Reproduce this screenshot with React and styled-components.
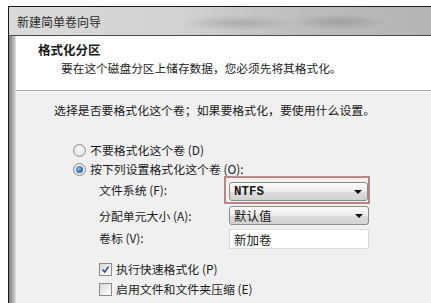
import React from 'react';
import styled, {createGlobalStyle, css} from 'styled-components';

const GlobalStyle = createGlobalStyle`
  html, body {
    margin: 0;
    padding: 0;
    background: #fff;
  }
  body {
    font-family: "Noto Sans CJK SC", "Liberation Sans", sans-serif;
    color: #1b1b1b;
    overflow: hidden;
  }
`;

const Window = styled.div`
  margin: 6px 0 0 8px;
  height: 297px;
  border-top: 1px solid #1a1a1a;
  border-left: 1px solid #1a1a1a;
  display: flex;
  flex-direction: column;
`;

const TitleBar = styled.div`
  height: 28px;
  display: flex;
  align-items: center;
  padding-left: 8px;
  font-size: 12px;
  color: #2a2a2a;
  background:
    radial-gradient(ellipse 60px 8px at 230px 16px, rgba(120,120,120,0.35), transparent),
    radial-gradient(ellipse 50px 8px at 330px 15px, rgba(110,110,110,0.35), transparent),
    linear-gradient(to right, #dadada 0%, #d2d2d2 40%, #bdbdbd 70%, #b4b4b4 100%);
  border-bottom: 1px solid #4a4a4a;
`;

const Frame = styled.div`
  flex: 1;
  display: flex;
`;

const LeftEdge = styled.div`
  width: 7px;
  background: linear-gradient(to right, #7c7c7c 0%, #9c9c9c 35%, #bcbcbc 70%, #e2e2e2 100%);
`;

const Content = styled.div`
  flex: 1;
  display: flex;
  flex-direction: column;
`;

const Header = styled.div`
  height: 55px;
  background: #fff;
  padding: 6px 0 0 22px;
  box-sizing: border-box;
  border-bottom: 1px solid #a8a8a8;
`;

const HeaderTitle = styled.div`
  font-size: 12.5px;
  font-weight: bold;
  line-height: 16px;
`;

const HeaderSub = styled.div`
  font-size: 11.7px;
  line-height: 16px;
  margin: 2px 0 0 23px;
`;

const Body = styled.div`
  flex: 1;
  background: #f0f0f0;
  border-top: 1px solid #fafafa;
  padding: 10px 0 0 38px;
  font-size: 11.9px;
`;

const Instruction = styled.div`
  line-height: 16px;
`;

const Options = styled.div`
  margin: 24px 0 0 19px;
  display: flex;
  flex-direction: column;
  gap: 3px;
`;

const Choice = styled.div`
  display: flex;
  align-items: center;
  gap: 4px;
  height: 16px;
  line-height: 16px;
`;

const Radio = styled.span`
  width: 11px;
  height: 11px;
  border-radius: 50%;
  border: 1px solid #8c8c8c;
  background: radial-gradient(circle at 50% 40%, #fafafa 0%, #dadada 100%);
  position: relative;
  ${p => p.$checked && css`
    &::after {
      content: "";
      position: absolute;
      left: 2px;
      top: 2px;
      width: 7px;
      height: 7px;
      border-radius: 50%;
      background: radial-gradient(circle at 40% 40%, #8ec0ef 0%, #2f6fb8 60%, #1d4a86 100%);
    }
  `}
`;

const Form = styled.div`
  margin: -4px 0 0 26px;
  display: grid;
  grid-template-columns: 125px 150px;
  row-gap: 2px;
  align-items: center;
`;

const Label = styled.div`
  line-height: 16px;
`;

const Highlight = styled.div`
  border: 2px solid #b98686;
  background: #f6f0f0;
  padding: 4px 3px 1px 3px;
  width: 146px;
  box-sizing: border-box;
`;

const Combo = styled.div`
  height: 19px;
  box-sizing: border-box;
  border: 1px solid #8a8a8a;
  border-radius: 3px;
  background: linear-gradient(to bottom, #fbfbfb 0%, #ececec 50%, #dcdcdc 51%, #d2d2d2 100%);
  display: flex;
  align-items: center;
  justify-content: space-between;
  padding: 0 4px 0 4px;
  width: ${p => p.$width || 139}px;
  margin-left: ${p => p.$offset || 0}px;
  font-family: ${p => p.$mono ? '"Liberation Mono", monospace' : 'inherit'};
  font-size: 12.5px;
  font-weight: ${p => p.$mono ? 'bold' : 'normal'};
  color: #1a1a1a;
`;

const Arrow = styled.span`
  width: 0;
  height: 0;
  border-left: 4px solid transparent;
  border-right: 4px solid transparent;
  border-top: 4px solid #111;
  margin-right: 1px;
`;

const TextBox = styled.div`
  height: 20px;
  box-sizing: border-box;
  width: 140px;
  margin: 2px 0 0 5px;
  border: 1px solid #dadada;
  background: #fff;
  display: flex;
  align-items: center;
  padding-left: 4px;
  font-size: 12.5px;
`;

const Checks = styled.div`
  margin: 12px 0 0 45px;
  display: flex;
  flex-direction: column;
  gap: 4px;
`;

const Box = styled.span`
  width: 11px;
  height: 11px;
  border: 1px solid #8c8c8c;
  background: linear-gradient(135deg, #d8d8d8 0%, #f4f4f4 70%, #fff 100%);
  display: flex;
  align-items: center;
  justify-content: center;
`;

const Check = () => (
    <svg width="9" height="9" viewBox="0 0 9 9">
        <path d="M1.5 4.5 L3.7 7 L7.6 1.6" fill="none" stroke="#27508f" strokeWidth="1.6"/>
    </svg>
);

const App = () => {
    return (
        <>
            <GlobalStyle/>
            <Window>
                <TitleBar>新建简单卷向导</TitleBar>
                <Frame>
                    <LeftEdge/>
                    <Content>
                        <Header>
                            <HeaderTitle>格式化分区</HeaderTitle>
                            <HeaderSub>要在这个磁盘分区上储存数据，您必须先将其格式化。</HeaderSub>
                        </Header>
                        <Body>
                            <Instruction>选择是否要格式化这个卷；如果要格式化，要使用什么设置。</Instruction>
                            <Options>
                                <Choice><Radio/>不要格式化这个卷 (D)</Choice>
                                <Choice><Radio $checked/>按下列设置格式化这个卷 (O):</Choice>
                                <Form>
                                    <Label>文件系统 (F):</Label>
                                    <Highlight>
                                        <Combo $mono>NTFS<Arrow/></Combo>
                                    </Highlight>
                                    <Label>分配单元大小 (A):</Label>
                                    <Combo $offset={5} $width={140}>默认值<Arrow/></Combo>
                                    <Label>卷标 (V):</Label>
                                    <TextBox>新加卷</TextBox>
                                </Form>
                            </Options>
                            <Checks>
                                <Choice><Box><Check/></Box>执行快速格式化 (P)</Choice>
                                <Choice><Box/>启用文件和文件夹压缩 (E)</Choice>
                            </Checks>
                        </Body>
                    </Content>
                </Frame>
            </Window>
        </>
    );
};

export default App;
